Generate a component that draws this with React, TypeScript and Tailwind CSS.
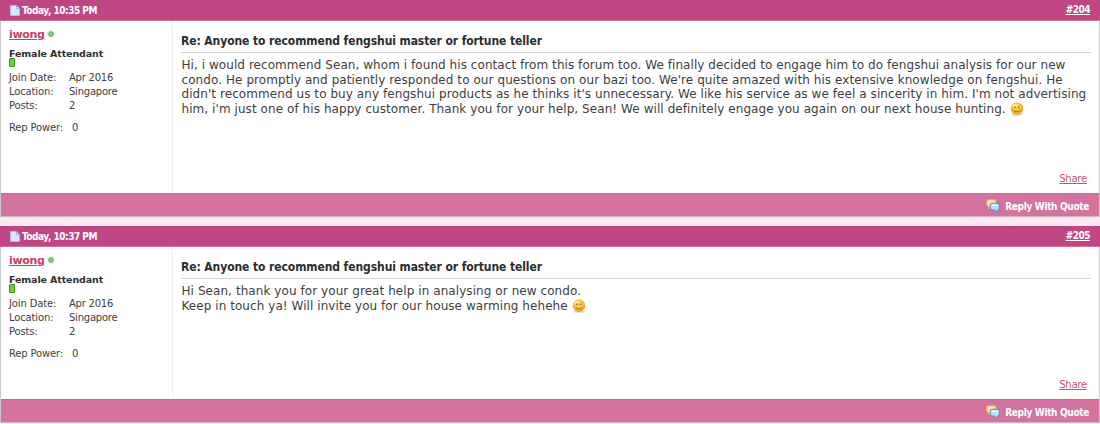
import { Fragment } from "react"

type Post = {
  id: number
  time: string
  lines: { text: string; spacing: string }[]
  bodyHeight: string
}

const posts: Post[] = [
  {
    id: 204,
    time: "10:35 PM",
    bodyHeight: "h-[172px]",
    lines: [
      { text: "Hi, i would recommend Sean, whom i found his contact from this forum too. We finally decided to engage him to do fengshui analysis for our new", spacing: "tracking-[0.06px]" },
      { text: "condo. He promptly and patiently responded to our questions on our bazi too. We're quite amazed with his extensive knowledge on fengshui. He", spacing: "tracking-[0.074px]" },
      { text: "didn't recommend us to buy any fengshui products as he thinks it's unnecessary. We like his service as we feel a sincerity in him. I'm not advertising", spacing: "tracking-[0.07px]" },
      { text: "him, i'm just one of his happy customer. Thank you for your help, Sean! We will definitely engage you again on our next house hunting.", spacing: "tracking-[0.07px]" },
    ],
  },
  {
    id: 205,
    time: "10:37 PM",
    bodyHeight: "h-[152px]",
    lines: [
      { text: "Hi Sean, thank you for your great help in analysing or new condo.", spacing: "tracking-[0.07px]" },
      { text: "Keep in touch ya! Will invite you for our house warming hehehe", spacing: "tracking-[0.06px]" },
    ],
  },
]

const stats = [
  ["Join Date:", "Apr 2016"],
  ["Location:", "Singapore"],
  ["Posts:", "2"],
]

function PageIcon() {
  return (
    <svg width="10" height="11" viewBox="0 0 10 11" className="shrink-0">
      <path d="M.5.5h6l3 3v7h-9z" fill="#d3e8fc" stroke="#a3bfe6" />
      <path d="M6.5.5v3h3z" fill="#fff" stroke="#6fa3e0" strokeWidth=".7" />
    </svg>
  )
}

function OnlineIcon() {
  return (
    <svg width="8" height="8" viewBox="0 0 9 9" className="shrink-0">
      <circle cx="4.5" cy="4.5" r="4.2" fill="#cfeccb" />
      <circle cx="4.5" cy="4.5" r="2.4" fill="#9bd697" stroke="#50a651" strokeWidth="1.1" />
      <circle cx="4.5" cy="4.5" r=".6" fill="#459b48" />
    </svg>
  )
}

function SmileIcon() {
  return (
    <svg width="14" height="14" viewBox="0 0 14 14" className="shrink-0">
      <ellipse cx="7" cy="12.4" rx="6.2" ry="1.4" fill="#dedbd8" />
      <circle cx="7" cy="6.7" r="5.9" fill="#f3ac2c" stroke="#e59a2b" strokeWidth=".6" />
      <ellipse cx="6.5" cy="5.6" rx="4.9" ry="4.5" fill="#fccf42" />
      <ellipse cx="5" cy="3.7" rx="2.6" ry="1.6" fill="#fde88e" />
      <ellipse cx="5" cy="5.2" rx=".6" ry="1" fill="#7a4512" />
      <ellipse cx="8.8" cy="5.2" rx=".6" ry="1" fill="#7a4512" />
      <path d="M3.5 7.9c1.5 2.6 5.5 2.6 7 0" fill="none" stroke="#a65e12" strokeWidth=".9" strokeLinecap="round" />
    </svg>
  )
}

function QuoteIcon() {
  return (
    <svg width="14" height="14" viewBox="0 0 14 14" className="mt-[2px] shrink-0">
      <path d="M2.5.6h5.6q2 0 2 2v3.2q0 2-2 2H4.5L2.7 9.9V7.8Q.6 7.6.6 5.8V2.6q0-2 1.9-2z" fill="#fde3a0" stroke="#e9a44e" strokeWidth=".9" />
      <path d="M6.2 4.3h5.2q2 0 2 2v2.8q0 1.8-1.8 1.9l-.5 2.4-2.4-2.4H6.2q-2 0-2-1.9V6.3q0-2 2-2z" fill="#b4e2fb" stroke="#3d8dc3" strokeWidth=".9" />
      <path d="M5.7 6.3h5.9" stroke="#f2fbff" strokeWidth="1.4" />
    </svg>
  )
}

function UserInfo() {
  return (
    <div className="w-[172px] shrink-0 border-r border-[#f0f0f0] pl-2 text-[10px] leading-[14px] text-[#3e3e3e]">
      <div className="flex h-[26px] items-start pt-[6px]">
        <a href="#" className="text-[11px] font-bold leading-[15px] tracking-[-0.35px] text-[#c53f6c] underline">iwong</a>
        <span className="ml-[3px] mt-[3px]"><OnlineIcon /></span>
      </div>
      <div className="h-[11px] whitespace-nowrap text-[9.5px] font-bold leading-[13px] tracking-[-0.12px] text-[#303030]">Female Attendant</div>
      <div className="h-[9px] w-[6px] rounded-[1px] border border-[#3d9424] bg-[#79c93e]" />
      <dl className="mt-1 grid grid-cols-[60px_1fr]">
        {stats.map(([label, value]) => (
          <Fragment key={label}>
            <dt className="tracking-[-0.14px]">{label}</dt>
            <dd className="tracking-[-0.23px]">{value}</dd>
          </Fragment>
        ))}
      </dl>
      <div className="mt-2 grid grid-cols-[63px_1fr]">
        <span className="tracking-[-0.16px]">Rep Power:</span>
        <span>0</span>
      </div>
    </div>
  )
}

function PostItem({ post }: { post: Post }) {
  return (
    <article>
      <header className="flex h-[21px] justify-between border-b border-[#d26ea0] bg-[#bf4783] pl-[10px] pr-[10px] text-[10px] font-bold text-white">
        <div className="flex items-center gap-[2px] pt-px">
          <PageIcon />
          <span className="tracking-[-0.48px] font-['DejaVu_Sans_Condensed','DejaVu_Sans',sans-serif] [font-stretch:condensed]">Today, {post.time}</span>
        </div>
        <a href="#" className="pt-[2px] leading-[15px] tracking-[-0.5px] underline font-['DejaVu_Sans_Condensed','DejaVu_Sans',sans-serif] [font-stretch:condensed]">#{post.id}</a>
      </header>
      <div className="border-x border-[#c9c9c9]">
        <div className={`flex bg-white ${post.bodyHeight}`}>
          <UserInfo />
          <div className="flex min-w-0 flex-1 flex-col pl-2 pr-2">
            <h2 className="h-[32px] whitespace-nowrap border-b border-[#d4d4d4] pt-[12px] text-[12px] font-bold leading-[16px] tracking-[-0.09px] text-[#2c2c2c] font-['DejaVu_Sans_Condensed','DejaVu_Sans',sans-serif] [font-stretch:condensed]">
              Re: Anyone to recommend fengshui master or fortune teller
            </h2>
            <div className="pl-[0.5px] pt-[5px] text-[12px] leading-[14.6px] text-[#3e3e3e]">
              {post.lines.map((line, i) => (
                <div key={line.text} className="flex items-center whitespace-nowrap">
                  <span className={line.spacing}>{line.text}</span>
                  {i === post.lines.length - 1 && <span className="-my-2 ml-1"><SmileIcon /></span>}
                </div>
              ))}
            </div>
            <a href="#" className="mb-[7px] mr-1 mt-auto self-end text-[10px] leading-[14px] tracking-[-0.2px] text-[#c9527b] underline">Share</a>
          </div>
        </div>
        <footer className="flex h-[24px] items-center justify-end gap-[5px] border-y border-t-[#c9699a] border-b-[#cdb5c2] bg-[#d4739f] pr-[10px] text-[10px] font-bold text-white">
          <QuoteIcon />
          <span className="pt-[2px] tracking-[-0.33px] font-['DejaVu_Sans_Condensed','DejaVu_Sans',sans-serif] [font-stretch:condensed]">Reply With Quote</span>
        </footer>
      </div>
    </article>
  )
}

export default function App() {
  return (
    <main className="flex h-[424px] w-[1100px] flex-col gap-[9px] overflow-hidden bg-[#fbe8f3] font-['Verdana','DejaVu_Sans',sans-serif]">
      {posts.map((post) => (
        <PostItem key={post.id} post={post} />
      ))}
    </main>
  )
}
